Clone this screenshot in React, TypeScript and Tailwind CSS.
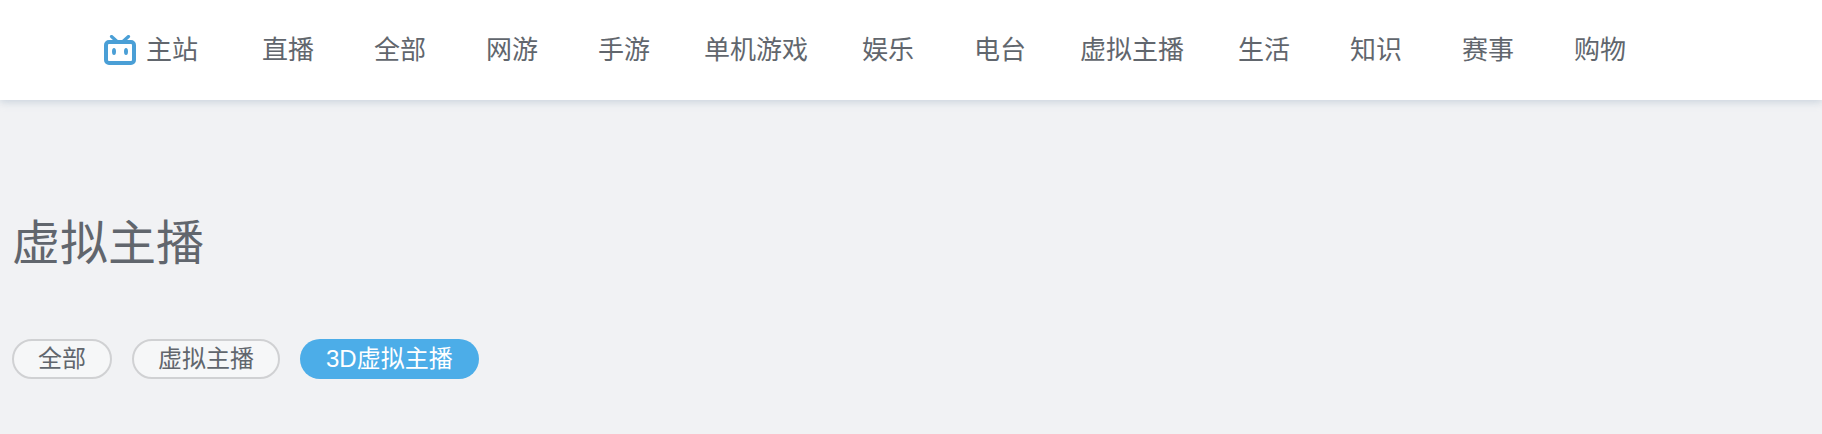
const navItems = ["直播", "全部", "网游", "手游", "单机游戏", "娱乐", "电台", "虚拟主播", "生活", "知识", "赛事", "购物"];

function Logo() {
  return (
    <svg width="32" height="30" viewBox="0 0 32 30" fill="none" className="shrink-0">
      <path d="M7.5 1.5l5 4.5M24.5 1.5l-5 4.5" stroke="#4a9fd6" strokeWidth="3.2" strokeLinecap="round" />
      <rect x="2" y="7" width="28" height="21" rx="3" fill="#fff" stroke="#4a9fd6" strokeWidth="4" />
      <ellipse cx="10" cy="16.5" rx="2" ry="3.5" fill="#4a9fd6" />
      <ellipse cx="22" cy="16.5" rx="2" ry="3.5" fill="#4a9fd6" />
    </svg>
  );
}

export default function App() {
  return (
    <main className="min-h-[434px] bg-[#f1f2f4] font-['Liberation_Sans','Noto_Sans_CJK_SC',sans-serif]">
      <header className="flex h-[100px] items-center bg-white pl-[104px] shadow-[0_2px_8px_rgba(150,170,190,0.45)]">
        <a className="flex w-[128px] shrink-0 items-center gap-[10px] text-[#61666d]">
          <Logo />
          <span className="text-[26px] leading-none">主站</span>
        </a>
        <nav className="flex items-center">
          {navItems.map((item) => (
            <a key={item} className="min-w-[112px] shrink-0 px-[24px] text-center text-[26px] leading-none text-[#61666d]">
              {item}
            </a>
          ))}
        </nav>
      </header>
      <section className="px-3">
        <h1 className="pt-[120px] text-[48px] leading-none font-normal text-[#61666d]">虚拟主播</h1>
        <div className="mt-[71px] flex items-center gap-5">
          <span className="flex h-10 items-center rounded-full border-2 border-[#d0d1d3] bg-[#f6f7f8] px-6 text-[24px] text-[#61666d]">全部</span>
          <span className="flex h-10 items-center rounded-full border-2 border-[#d0d1d3] bg-[#f6f7f8] px-6 text-[24px] text-[#61666d]">虚拟主播</span>
          <span className="flex h-10 items-center rounded-full bg-[#4cade8] px-[26px] text-[24px] text-white">3D虚拟主播</span>
        </div>
      </section>
    </main>
  );
}
